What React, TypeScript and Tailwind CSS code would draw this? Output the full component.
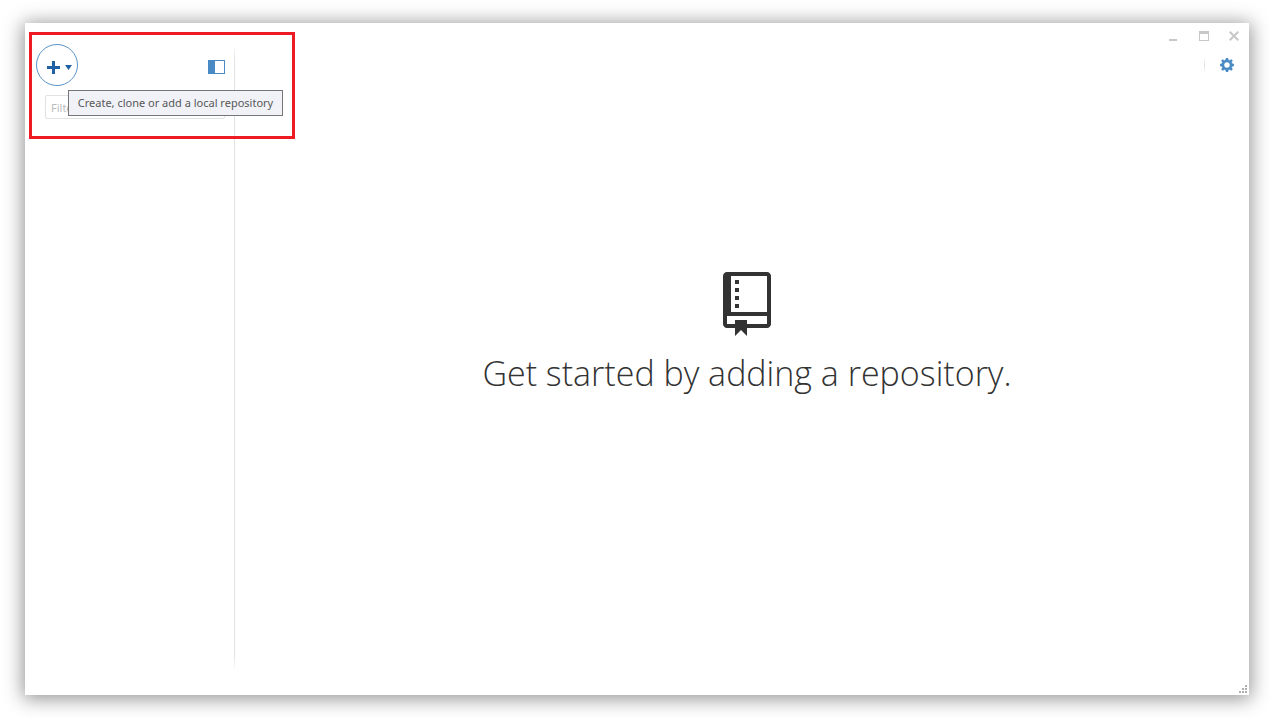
function WindowControls() {
  return (
    <div className="flex h-5 items-center gap-5 text-[#c8c8c8]">
      <button type="button" aria-label="Minimize" className="flex size-2.5">
        <svg viewBox="0 0 10 10" className="size-2.5" fill="currentColor">
          <path d="M0 8h8v2H0z" />
        </svg>
      </button>
      <button type="button" aria-label="Maximize" className="flex size-2.5">
        <svg viewBox="0 0 10 10" className="size-2.5" fill="currentColor">
          <path fillRule="evenodd" d="M0 0h10v10H0zM1 3v6h8V3z" />
        </svg>
      </button>
      <button type="button" aria-label="Close" className="flex size-2.5">
        <svg viewBox="0 0 10 10" className="size-2.5" fill="none" stroke="currentColor" strokeWidth="2">
          <path d="M.7.7l8.6 8.6M9.3.7L.7 9.3" />
        </svg>
      </button>
    </div>
  );
}

function GearIcon() {
  return (
    <svg viewBox="0 1 14 14" className="size-3.5" fill="#4a8ac4" stroke="#4a8ac4" strokeWidth="0.4">
      <path d="M14 8.77v-1.6l-1.94-.64-.45-1.09.88-1.84-1.13-1.13-1.81.91-1.09-.45-.69-1.92h-1.6l-.63 1.94-1.11.45-1.84-.88-1.13 1.13.91 1.81-.45 1.09L0 7.23v1.59l1.94.64.45 1.09-.88 1.84 1.13 1.13 1.81-.91 1.09.45.69 1.92h1.59l.63-1.94 1.11-.45 1.84.88 1.13-1.13-.92-1.81.47-1.09L14 8.75v.02zM7 11c-1.66 0-3-1.34-3-3s1.34-3 3-3 3 1.34 3 3-1.34 3-3 3z" />
    </svg>
  );
}

function RepoIcon() {
  return (
    <svg viewBox="0 0 12 16" className="h-16 w-12" fill="#333333" aria-hidden="true">
      <path d="M4 9H3V8h1v1zm0-3H3v1h1V6zm0-2H3v1h1V4zm0-2H3v1h1V2zm8-1v12c0 .55-.45 1-1 1H6v2l-1.5-1.5L3 16v-2H1c-.55 0-1-.45-1-1V1c0-.55.45-1 1-1h10c.55 0 1 .45 1 1zm-1 10H1v2h2v-1h3v1h5v-2zm0-10H2v9h9V1z" />
    </svg>
  );
}

function Sidebar() {
  return (
    <aside className="relative w-[209px] shrink-0 pt-[21px] pr-[9px] pl-[11px]">
      <div className="flex items-center justify-between">
        <button
          type="button"
          aria-label="Add repository"
          aria-describedby="add-tooltip"
          className="flex size-[42px] items-center justify-center rounded-full border border-[#5b93c9] pt-1 pl-1.5"
        >
          <svg viewBox="0 0 26 14" className="h-3.5 w-[26px]" fill="#2060a4">
            <path d="M5 1h3v5h5v3H8v5H5V9H0V6h5zM18 5h7l-3.5 5z" />
          </svg>
        </button>
        <button type="button" aria-label="Toggle sidebar" className="mt-1 flex">
          <svg viewBox="0 0 17 14" className="h-3.5 w-[17px]" fill="#4a8ac4">
            <path fillRule="evenodd" d="M0 0h17v14H0zM7 1v12h9V1z" />
          </svg>
        </button>
      </div>
      <input
        type="text"
        aria-label="Filter repositories"
        placeholder="Filter repositories"
        className="mt-[9px] ml-[9px] block h-6 w-[180px] rounded-xs border border-[#e2e2e2] px-[5px] text-[11px] outline-none placeholder:text-[#bbbbbb]"
      />
      <div
        id="add-tooltip"
        role="tooltip"
        className="absolute top-[67px] left-[43px] z-10 flex h-[26px] w-[215px] items-center justify-center border border-[#767676] bg-[#f1f2f7] pt-px text-[11px] whitespace-nowrap text-[#575757]"
      >
        Create, clone or add a local repository
      </div>
      <div className="pointer-events-none absolute top-[9px] left-1 z-20 h-[107px] w-[266px] border-3 border-[#ed1c24]" />
    </aside>
  );
}

export default function App() {
  return (
    <div className="flex min-h-screen bg-white pt-[23px] pr-5 pb-[22px] pl-[25px] font-['Noto_Sans','Open_Sans',sans-serif]">
      <div className="relative flex flex-1 bg-white shadow-[0_2px_18px_2px_rgba(0,0,0,0.42)]">
        <Sidebar />
        <div className="mt-[21px] mb-6 w-px shrink-0 bg-[linear-gradient(to_bottom,transparent,#e2e2e2_16px,#e2e2e2_calc(100%-16px),transparent)]" />
        <main className="flex flex-1 flex-col">
          <header className="flex flex-col items-end pt-[3px] pr-2.5">
            <WindowControls />
            <div className="mt-[11px] mr-[5px] flex items-center gap-[15px]">
              <span className="h-4 w-px bg-linear-to-b from-transparent via-[#dddddd] to-transparent" />
              <button type="button" aria-label="Settings" className="flex">
                <GearIcon />
              </button>
            </div>
          </header>
          <section className="flex flex-1 flex-col items-center justify-center gap-[13px] pb-[99px] pl-2.5">
            <RepoIcon />
            <h1 className="font-['Open_Sans','Noto_Sans',sans-serif] text-[34px] leading-12 font-light text-[#333333]">
              Get started by adding a repository.
            </h1>
          </section>
        </main>
        <svg viewBox="0 0 8 8" className="absolute right-0.5 bottom-0.5 size-2" fill="#b0b0b0" aria-hidden="true">
          <path d="M6 0h2v2H6zM3 3h2v2H3zM6 3h2v2H6zM0 6h2v2H0zM3 6h2v2H3zM6 6h2v2H6z" />
        </svg>
      </div>
    </div>
  );
}
